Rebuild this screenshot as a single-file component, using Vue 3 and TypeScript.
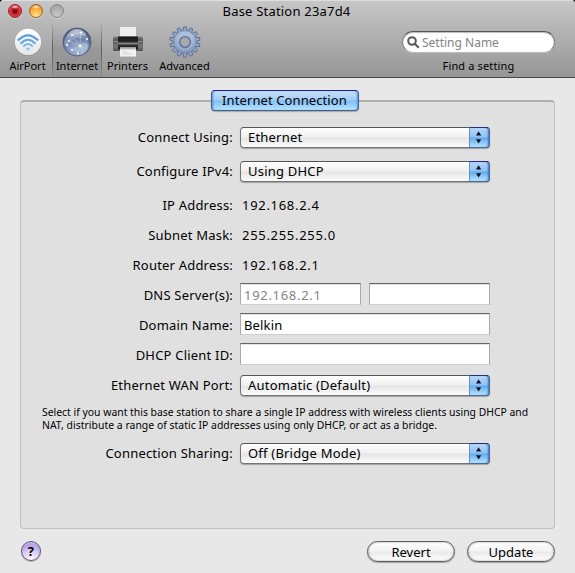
<script setup lang="ts">
import { ref } from 'vue'

type RowKind = 'popup' | 'text' | 'field' | 'pair'
interface Row {
  label: string
  kind: RowKind
  values: string[]
}

const tabs = ['AirPort', 'Internet', 'Printers', 'Advanced']
const selected = ref('Internet')

const rows: Row[] = [
  { label: 'Connect Using:', kind: 'popup', values: ['Ethernet'] },
  { label: 'Configure IPv4:', kind: 'popup', values: ['Using DHCP'] },
  { label: 'IP Address:', kind: 'text', values: ['192.168.2.4'] },
  { label: 'Subnet Mask:', kind: 'text', values: ['255.255.255.0'] },
  { label: 'Router Address:', kind: 'text', values: ['192.168.2.1'] },
  { label: 'DNS Server(s):', kind: 'pair', values: ['192.168.2.1', ''] },
  { label: 'Domain Name:', kind: 'field', values: ['Belkin'] },
  { label: 'DHCP Client ID:', kind: 'field', values: [''] },
  { label: 'Ethernet WAN Port:', kind: 'popup', values: ['Automatic (Default)'] },
]
const sharing: Row = { label: 'Connection Sharing:', kind: 'popup', values: ['Off (Bridge Mode)'] }
const allRows = [...rows, sharing]

const teeth = Array.from({ length: 14 }, (_, i) => (i * 360) / 14)
</script>

<template>
  <div class="window">
    <header class="chrome">
      <div class="titlebar">
        <div class="lights">
          <i class="light red"></i>
          <i class="light yellow"></i>
          <i class="light gray"></i>
        </div>
        <h1 class="title">Base Station 23a7d4</h1>
      </div>
      <div class="toolbar">
        <button
          v-for="tab in tabs"
          :key="tab"
          class="tool"
          :class="[tab.toLowerCase(), { selected: tab === selected }]"
          @click="selected = tab"
        >
          <svg v-if="tab === 'AirPort'" class="icon" viewBox="0 0 32 32">
            <defs>
              <linearGradient id="ap" x1="0" y1="0" x2="0" y2="1">
                <stop offset="0" stop-color="#fff" />
                <stop offset="1" stop-color="#e4e6e8" />
              </linearGradient>
            </defs>
            <circle cx="16" cy="16.6" r="13.4" fill="#777" opacity=".5" />
            <circle cx="16" cy="16" r="13.2" fill="url(#ap)" />
            <g fill="none" stroke-linecap="butt">
              <path d="M5.8 14.6Q16 4 26.2 14.6" stroke="#5a9be4" stroke-width="2.2" />
              <path d="M8.5 17.7Q16 9.8 23.5 17.7" stroke="#69a9ea" stroke-width="2.2" />
              <path d="M11.2 20.6Q16 15.4 20.8 20.6" stroke="#7ab8ee" stroke-width="2.1" />
            </g>
            <path d="M13.6 22.6Q16 20.4 18.4 22.6L16 25Z" fill="#8fcbed" />
          </svg>
          <svg v-else-if="tab === 'Internet'" class="icon" viewBox="0 0 32 32">
            <defs>
              <radialGradient id="globe" cx=".5" cy=".8" r=".85">
                <stop offset="0" stop-color="#a9bbdb" />
                <stop offset=".5" stop-color="#7183ab" />
                <stop offset="1" stop-color="#34426a" />
              </radialGradient>
              <linearGradient id="gloss" x1="0" y1="0" x2="0" y2="1">
                <stop offset="0" stop-color="#fff" stop-opacity=".65" />
                <stop offset="1" stop-color="#fff" stop-opacity=".12" />
              </linearGradient>
            </defs>
            <circle cx="16" cy="16" r="14" fill="url(#globe)" stroke="#46557c" stroke-width=".8" />
            <path d="M7 8Q15 2 25 8Q20 13 15 12Q8 16 4 20Q2 13 7 8Z" fill="#b5c3da" opacity=".4" />
            <path d="M17 19Q25 15 28 19Q26 27 19 29Q21 24 17 19Z" fill="#d2ddec" opacity=".45" />
            <g fill="none" stroke="#d7e2f5" stroke-width=".5" opacity=".7">
              <path d="M5 19L11 9L20 6L26 13L19 20L11 24L5 19M11 9L19 20L17 28M11 9L26 13L25 23L19 20L8 15M20 6L19 20" />
            </g>
            <g fill="#fff">
              <circle cx="11" cy="9" r="1.1" /><circle cx="20" cy="6.5" r="1.1" />
              <circle cx="26" cy="13" r="1" /><circle cx="19" cy="20" r="1.3" />
              <circle cx="11" cy="24" r="1" /><circle cx="6" cy="19" r="1.1" />
              <circle cx="8" cy="14.8" r=".9" /><circle cx="17" cy="27.5" r=".9" />
            </g>
            <path d="M5 12Q8 3 16 3Q24 3 27 12Q16 7 5 12Z" fill="url(#gloss)" />
          </svg>
          <svg v-else-if="tab === 'Printers'" class="icon" viewBox="0 0 32 32">
            <defs>
              <linearGradient id="pr" x1="0" y1="0" x2="0" y2="1">
                <stop offset="0" stop-color="#858585" />
                <stop offset=".25" stop-color="#555" />
                <stop offset=".7" stop-color="#777" />
                <stop offset="1" stop-color="#4b4b4b" />
              </linearGradient>
              <linearGradient id="slot" x1="0" y1="0" x2="0" y2="1">
                <stop offset="0" stop-color="#171717" />
                <stop offset=".42" stop-color="#272727" />
                <stop offset=".55" stop-color="#8b8b8b" />
                <stop offset=".7" stop-color="#333" />
                <stop offset="1" stop-color="#0e0e0e" />
              </linearGradient>
            </defs>
            <rect x="8" y="1" width="16" height="13" fill="#eee" />
            <path d="M2 10.5H30L31 13V23.5Q31 25 29.5 25H2.5Q1 25 1 23.5V13Z" fill="url(#pr)" />
            <rect x="6" y="10.5" width="20" height="12.5" fill="url(#slot)" />
            <path d="M1.5 15.5H6M26 15.5H30.5" stroke="#a2a2a2" stroke-width=".8" />
            <path d="M8 21.5H24V30.5H8Z" fill="#f3f3f3" />
            <path d="M8 21.5H24V23.5H8Z" fill="#b9b9b9" />
            <path d="M10 26H17M10 28H21" stroke="#ccc" stroke-width=".8" />
          </svg>
          <svg v-else class="icon" viewBox="0 0 32 32">
            <defs>
              <linearGradient id="gear" x1="0" y1="0" x2="0" y2="1">
                <stop offset="0" stop-color="#b3c4df" />
                <stop offset="1" stop-color="#7f96bd" />
              </linearGradient>
            </defs>
            <g fill="#90a5c8" stroke="#536687" stroke-width=".8">
              <path
                v-for="a in teeth"
                :key="a"
                d="M13.8 6L14.7 .9H17.3L18.2 6Z"
                :transform="`rotate(${a} 16 16)`"
              />
            </g>
            <circle cx="16" cy="16" r="11.2" fill="url(#gear)" stroke="#627696" stroke-width=".5" />
            <circle cx="16" cy="16" r="7.5" fill="none" stroke="#bdcbe1" stroke-width="1" opacity=".6" />
            <circle cx="16" cy="16" r="5.3" fill="#a9a9ab" stroke="#5b6f92" stroke-width="1.3" />
          </svg>
          <span>{{ tab }}</span>
        </button>
        <div class="finder">
          <div class="search">
            <svg class="lens" viewBox="0 0 13 13">
              <circle cx="5" cy="5" r="3.8" />
              <path d="M7.8 7.8L11.8 11.8" />
            </svg>
            <span>Setting Name</span>
          </div>
          <span class="caption">Find a setting</span>
        </div>
      </div>
    </header>

    <main class="body">
      <section class="group">
        <div class="tabhead"><span class="segment">Internet Connection</span></div>
        <div class="form">
          <template v-for="(row, i) in allRows" :key="row.label">
            <p v-if="i === allRows.length - 1" class="note">
              <span class="l1">Select if you want this base station to share a single IP address with wireless clients using DHCP and</span>
              <span class="l2">NAT, distribute a range of static IP addresses using only DHCP, or act as a bridge.</span>
            </p>
            <label class="label" :class="row.kind">{{ row.label }}</label>
            <div v-if="row.kind === 'popup'" class="popup-button">
              <span class="popup-text">{{ row.values[0] }}</span>
              <span class="arrows">
                <svg viewBox="0 0 20 19">
                  <path d="M8.6 3.2L11.2 7.6H6ZM8.6 15.6L11.2 11.2H6Z" fill="#0b1220" />
                </svg>
              </span>
            </div>
            <div v-else-if="row.kind === 'text'" class="static">{{ row.values[0] }}</div>
            <div v-else class="fields">
              <div v-for="(v, n) in row.values" :key="n" class="input" :class="{ dim: row.kind === 'pair' }">{{ v }}</div>
            </div>
          </template>
        </div>
      </section>

      <footer class="footer">
        <button class="help">?</button>
        <button class="push">Revert</button>
        <button class="push">Update</button>
      </footer>
    </main>
  </div>
</template>

<style>
body {
  background: #000;
}
</style>

<style scoped>
.window {
  box-sizing: border-box;
  width: 575px;
  height: 573px;
  display: flex;
  flex-direction: column;
  overflow: hidden;
  border-radius: 4px 4px 0 0;
  background: #e8e8e8;
  color: #000;
  font-family: 'Noto Sans', 'Open Sans', sans-serif;
  font-size: 13px;
  letter-spacing: 0.15px;
  white-space: nowrap;
}
button {
  padding: 0;
  border: 0;
  background: none;
  color: inherit;
  font: inherit;
  letter-spacing: inherit;
}
.chrome {
  box-sizing: border-box;
  height: 78px;
  border-top: 1px solid #dedede;
  border-bottom: 1px solid #454545;
  background: linear-gradient(#c6c6c6, #969696);
}
.titlebar {
  display: grid;
  grid-template-columns: 72px 1fr 74px;
  height: 22px;
}
.lights {
  display: flex;
  gap: 7px;
  padding: 3px 0 0 8px;
}
.light {
  box-sizing: border-box;
  width: 14px;
  height: 14px;
  border-radius: 50%;
  border: 1px solid;
  box-shadow: 0 1px 0 rgba(255, 255, 255, 0.4);
}
.red {
  border-color: #8e2226;
  background:
    radial-gradient(ellipse 4px 2px at 50% 16%, #ffdcdc, transparent),
    radial-gradient(circle at 50% 52%, #7d0c12 0 1.5px, #d22531 3.5px, #ec5560 7px);
}
.yellow {
  border-color: #9d6023;
  background:
    radial-gradient(ellipse 4px 2px at 50% 16%, #fff3dc, transparent),
    radial-gradient(circle at 50% 90%, #ffe88a, #f7a93a 60%, #d87c20);
}
.gray {
  border-color: #848484;
  background: radial-gradient(circle at 50% 85%, #c9c9c9, #aaa 70%, #9e9e9e);
}
.title {
  margin: 0;
  font-size: 13px;
  font-weight: 400;
  line-height: 21px;
  letter-spacing: 0.2px;
  text-align: center;
}
.toolbar {
  display: flex;
  height: 54px;
  padding-left: 3px;
}
.tool {
  box-sizing: border-box;
  display: flex;
  flex-direction: column;
  align-items: center;
  width: 49px;
  padding-top: 3px;
  font-size: 11px;
  line-height: 15px;
  letter-spacing: 0;
}
.tool.printers {
  width: 51px;
}
.tool.advanced {
  width: 63px;
}
.tool.selected {
  width: 50px;
  border: 1px solid;
  border-width: 0 1px;
  border-image: linear-gradient(rgba(70, 70, 70, 0), rgba(70, 70, 70, 0.75) 50%, rgba(70, 70, 70, 0.1)) 1;
  background: linear-gradient(rgba(0, 0, 0, 0), rgba(0, 0, 0, 0.09) 50%, rgba(0, 0, 0, 0.02));
}
.icon {
  display: block;
  width: 32px;
  height: 32px;
}
.finder {
  display: flex;
  flex-direction: column;
  align-items: center;
  width: 153px;
  margin: 8px 20px 0 auto;
}
.search {
  box-sizing: border-box;
  display: flex;
  align-items: center;
  gap: 2px;
  width: 153px;
  height: 22px;
  padding-left: 4px;
  border: 1px solid #858585;
  border-top-color: #555;
  border-bottom-color: #bbb;
  border-radius: 11px;
  background: #fff;
  box-shadow: inset 0 1px 1px #bbb;
  color: #858585;
  font-size: 12px;
}
.search span {
  letter-spacing: 0;
}
.lens {
  width: 13px;
  height: 13px;
  fill: none;
  stroke: #585858;
  stroke-width: 2;
}
.caption {
  margin-top: 4px;
  font-size: 11px;
  line-height: 17px;
}
.body {
  flex: 1;
  padding: 12px 20px 0;
}
.group {
  box-sizing: border-box;
  width: 535px;
  height: 429px;
  margin-top: 10px;
  border: 1px solid #c0c0c0;
  border-top: 2px solid #adb0ad;
  border-radius: 4px;
  background: #e0e0e0;
}
.tabhead {
  display: flex;
  justify-content: center;
  height: 25px;
  margin-top: -12px;
  padding-right: 6px;
}
.segment {
  box-sizing: border-box;
  width: 148px;
  height: 21px;
  border: 1px solid #42618f;
  border-top-color: #20247d;
  border-radius: 4px;
  background: linear-gradient(#c5def7, #a3cdf7 48%, #83bdf5 52%, #b5e4ff);
  box-shadow: 0 1px 1px rgba(0, 0, 0, 0.25), inset 2px 0 2px -1px #4a91df, inset -2px 0 2px -1px #4a91df;
  line-height: 19px;
  text-align: center;
  letter-spacing: 0.1px;
}
.form {
  display: grid;
  grid-template-columns: 212px 250px;
  grid-template-rows: 34px 36px 30px 30px 26px 30px 30px 32px 31px 37px 21px;
  column-gap: 7px;
  align-items: start;
  padding-top: 12px;
}
.label {
  text-align: right;
  line-height: 21px;
  letter-spacing: 0.2px;
}
.label.text,
.static {
  line-height: 17px;
}
.label.field,
.label.pair {
  line-height: 24px;
}
.popup-button {
  box-sizing: border-box;
  display: flex;
  justify-content: space-between;
  height: 21px;
  padding-left: 7px;
  border: 1px solid #737373;
  border-top-color: #555;
  border-radius: 4px;
  background: linear-gradient(#fff, #f0f0f0 47%, #e5e5e5 53%, #fcfcfc);
  box-shadow: 0 1px 1px rgba(0, 0, 0, 0.28);
}
.popup-text {
  line-height: 19px;
  letter-spacing: 0.2px;
}
.arrows {
  box-sizing: border-box;
  width: 21px;
  height: 21px;
  margin: -1px;
  border: 1px solid #4d6895;
  border-top-color: #242b7b;
  border-left-color: #5e91cf;
  border-radius: 0 4px 4px 0;
  background: linear-gradient(#b8d7f6, #8fc2f4 47%, #66aaec 53%, #b4e5ff);
  box-shadow: inset -2px 0 2px -1px #2e6fc4;
}
.arrows svg {
  display: block;
  width: 20px;
  height: 19px;
}
.static {
  padding-left: 2px;
  letter-spacing: 0.7px;
}
.fields {
  display: flex;
  gap: 8px;
}
.input {
  box-sizing: border-box;
  flex: 1;
  height: 22px;
  padding-left: 3px;
  border: 1px solid #a9a9a9;
  border-top-color: #646464;
  border-bottom-color: #d0d0d0;
  background: #fff;
  box-shadow: inset 0 1px 0 #e3e3e3;
  line-height: 22px;
}
.input.dim {
  color: #858585;
  letter-spacing: 0.7px;
}
.note {
  grid-column: 1 / -1;
  margin: 0 0 0 21px;
  font-size: 10.4px;
  line-height: 13px;
  letter-spacing: 0;
}
.note span {
  display: block;
}
.note .l2 {
  letter-spacing: 0.03px;
}
.footer {
  display: flex;
  align-items: flex-start;
  gap: 12px;
  padding-top: 12px;
}
.help {
  box-sizing: border-box;
  width: 20px;
  height: 20px;
  margin-left: 1px;
  margin-right: auto;
  border: 1px solid #615a75;
  border-radius: 50%;
  background: radial-gradient(circle at 50% 100%, #fff, #dccdf8 45%, #b79fe9 75%, #dcd0f5);
  box-shadow: 0 1px 1px rgba(0, 0, 0, 0.25);
  font-size: 13px;
  font-weight: 700;
  line-height: 17px;
}
.push {
  box-sizing: border-box;
  width: 88px;
  height: 21px;
  border: 1px solid #5d5d5d;
  border-radius: 11px;
  background: linear-gradient(#fff, #f4f4f4 47%, #e9e9e9 53%, #fff);
  box-shadow: 0 1px 1px rgba(0, 0, 0, 0.3), inset 0 0 2px #888;
  line-height: 18px;
  letter-spacing: 0;
}
</style>
